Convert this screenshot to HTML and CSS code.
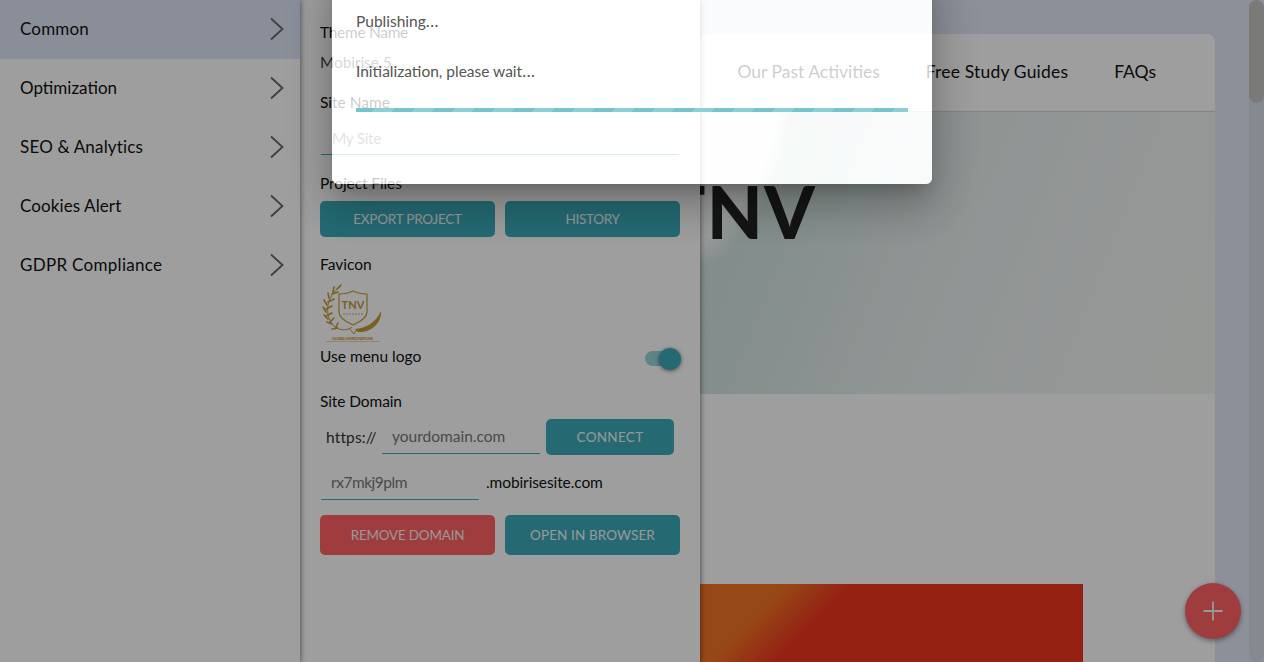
FILE: index.html
```html
<!DOCTYPE html>
<html lang="en">
<head>
<meta charset="utf-8">
<title>Site settings</title>
<link rel="stylesheet" href="styles.css">
</head>
<body>
<div class="app">
  <nav class="sidebar">
    <a class="tab tab-active"><span class="ls-2">Common</span><svg class="chev" viewBox="0 0 14 24"><path d="M1 1.5 12.5 12 1 22.5"/></svg></a>
    <a class="tab"><span>Optimization</span><svg class="chev" viewBox="0 0 14 24"><path d="M1 1.5 12.5 12 1 22.5"/></svg></a>
    <a class="tab"><span class="ls-2">SEO &amp; Analytics</span><svg class="chev" viewBox="0 0 14 24"><path d="M1 1.5 12.5 12 1 22.5"/></svg></a>
    <a class="tab"><span class="ls-1">Cookies Alert</span><svg class="chev" viewBox="0 0 14 24"><path d="M1 1.5 12.5 12 1 22.5"/></svg></a>
    <a class="tab"><span class="ls-3">GDPR Compliance</span><svg class="chev" viewBox="0 0 14 24"><path d="M1 1.5 12.5 12 1 22.5"/></svg></a>
  </nav>

  <section class="panel">
    <div class="label label-theme">Theme Name</div>
    <div class="value">Mobirise 5</div>
    <div class="label label-site">Site Name</div>
    <div class="field field-wide">My Site</div>
    <div class="label label-files">Project Files</div>
    <div class="row">
      <button class="btn ls-n2">EXPORT PROJECT</button>
      <button class="btn ls-n3">HISTORY</button>
    </div>
    <div class="label label-favicon">Favicon</div>
    <svg class="favicon" viewBox="0 0 62 62">
      <g fill="none" stroke="#c49b34">
        <path d="M20 6C7 14 3 34 14 45c6 5 13 5 18 1" stroke-width="1"/>
        <path d="M17 8l4-4M13 11l1-5M12 13l6-2M9 17l-1-5M8 21l6-3M7 24l-3-5M6 28l6-3M6 31l-3-5M6 35l6-3M8 38l-4-4M10 41l4-4M12 43l-5-2M16 46l2-4M18 47l-6 1" stroke-width="1.6" stroke-linecap="round"/>
        <path d="M33 10c4 2 8 3 14 3v18c0 6-7 10-14 13-7-3-14-7-14-13V13c6 0 10-1 14-3z" stroke-width="1.2"/>
        <path d="M23 33h21" stroke-width=".8" stroke-dasharray="2 1"/>
        <path d="M29 47l5 6 3-5" stroke-width="1"/>
        <path d="M6 60.5h54" stroke-width=".4"/>
      </g>
      <path d="M35 48c12-1 21-7 26-18 1 10-8 22-23 21z" fill="#c49b34"/>
      <text class="crest-name" x="21.5" y="27.5" textLength="23">TNV</text>
      <text class="crest-line" x="12" y="58.6" textLength="41">GLOBAL UNITED NATIONS</text>
    </svg>
    <div class="row-toggle">
      <span>Use menu logo</span>
      <span class="toggle"><span class="thumb"></span></span>
    </div>
    <div class="label label-domain">Site Domain</div>
    <div class="domain">
      <span class="proto">https://</span>
      <span class="field field-short">yourdomain.com</span>
      <button class="btn btn-connect">CONNECT</button>
    </div>
    <div class="domain domain-sub">
      <span class="field field-short ls-n5">rx7mkj9plm</span>
      <span class="suffix">.mobirisesite.com</span>
    </div>
    <div class="row row-tall">
      <button class="btn btn-red ls-n2">REMOVE DOMAIN</button>
      <button class="btn ls-1">OPEN IN BROWSER</button>
    </div>
  </section>

  <main class="preview">
    <div class="page">
      <header class="menu">
        <a>Our Past Activities</a>
        <a class="ls-2">Free Study Guides</a>
        <a>FAQs</a>
      </header>
      <div class="hero"><h1>TNV</h1></div>
      <div class="photo"></div>
    </div>
    <div class="track"><div class="handle"></div></div>
  </main>

  <button class="fab"><svg viewBox="0 0 20 20"><path d="M10 .5v19M.5 10h19"/></svg></button>

  <div class="dialog">
    <p class="title">Publishing<span class="dots">…</span></p>
    <p class="status">Initialization, please wait<span class="dots">…</span></p>
    <div class="progress"></div>
  </div>
</div>
</body>
</html>
```
FILE: styles.css
```css
* { box-sizing: border-box; }
body { margin: 0; font-family: Lato, sans-serif; color: #111; }
.app {
  position: relative;
  display: flex;
  width: 1264px;
  height: 662px;
  overflow: hidden;
  background: #e3e9f6;
}

.sidebar { position: relative; z-index: 3; width: 300px; background: #fff; box-shadow: 0 0 6px rgba(0,0,0,.6); }
.tab {
  display: flex;
  align-items: center;
  justify-content: space-between;
  height: 59px;
  padding: 0 16px 2px 20px;
  font-size: 17px;
}
.tab-active { background: #dfe6f6; }
.chev { width: 14px; height: 24px; margin-top: 1px; fill: none; stroke: #666; stroke-width: 1.8; }

.ls-1 { letter-spacing: .1px; }
.ls-2 { letter-spacing: .18px; }
.ls-3 { letter-spacing: .3px; }
.ls-n2 { letter-spacing: -.22px; }
.ls-n3 { letter-spacing: -.3px; }
.ls-n5 { letter-spacing: -.48px; }

.panel {
  position: relative;
  z-index: 2;
  display: flex;
  flex-direction: column;
  width: 400px;
  padding: 0 20px;
  background: #fff;
  font-size: 15.5px;
  line-height: 20px;
  box-shadow: 0 0 6px rgba(0,0,0,.6);
}
.label-theme { margin-top: 22px; letter-spacing: -.3px; }
.value { margin-top: 10px; color: #444; letter-spacing: -.1px; }
.label-site { margin-top: 20px; }
.field { border-bottom: 1px solid #3dabb8; color: #777; padding: 6px 10px 7px; height: 34px; }
.field-wide { margin: 9px 1px 0; padding: 7px 11px 6px; letter-spacing: -.35px; }
.label-files { margin-top: 18px; letter-spacing: -.1px; }
.row { display: flex; gap: 10px; margin-top: 8px; }
.btn {
  flex: 1;
  height: 36px;
  padding: 0;
  border: 0;
  border-radius: 5px;
  background: #3dabb8;
  color: #f5f5f5;
  font-family: inherit;
  font-size: 13.5px;
}
.label-favicon { margin-top: 17px; }
.favicon { width: 62px; height: 62px; margin-top: 7px; flex: none; }
.crest-name { font: 700 11px Lato, sans-serif; fill: #c49b34; }
.crest-line { font: 700 4px Lato, sans-serif; fill: #c49b34; }
.row-toggle { display: flex; justify-content: space-between; margin-top: 3px; height: 24px; }
.toggle { display: flex; justify-content: flex-end; align-items: center; width: 35px; height: 15px; margin-top: 5px; border-radius: 8px; background: #98d5dc; }
.thumb { width: 22px; height: 22px; flex: none; margin-right: -1px; border-radius: 50%; background: #3dabb8; box-shadow: 0 1px 4px rgba(0,0,0,.5); }
.label-domain { margin-top: 21px; letter-spacing: -.1px; }
.domain { display: flex; align-items: center; margin-top: 8px; }
.proto { width: 62px; padding-left: 6px; color: #333; letter-spacing: .15px; }
.field-short { width: 158px; }
.btn-connect { flex: none; width: 128px; margin-left: 6px; letter-spacing: .3px; }
.domain-sub { margin-top: 11px; padding-left: 1px; }
.suffix { margin: -2px 0 0 7px; letter-spacing: -.1px; }
.row-tall { margin-top: 15px; }
.row-tall .btn { height: 40px; }
.btn-red { background: #ff6265; }

.preview { display: flex; justify-content: space-between; width: 564px; }
.page { width: 515px; margin-top: 34px; border-radius: 8px 8px 0 0; background: #fff; }
.menu {
  display: flex;
  justify-content: flex-end;
  gap: 46px;
  height: 78px;
  padding: 0 59px 0 0;
  border-bottom: 1px solid #d5d5d5;
  font-size: 17.5px;
  line-height: 76px;
  white-space: nowrap;
}
.hero {
  height: 282px;
  background:
    radial-gradient(ellipse 125px 210px at -30px -50px, rgba(255,255,255,.85) 88%, rgba(255,255,255,0) 102%),
    linear-gradient(112deg, #cfe2df 0%, #d6e6e3 20%, #e8f0ef 48%, #f0f4f3 75%, #f3f5f2 100%);
}
h1 { margin: 0 0 0 -38px; padding-top: 56px; font-size: 72px; line-height: 86px; font-weight: 900; letter-spacing: 1.5px; color: #222; }
.photo { width: 383px; height: 78px; margin-top: 190px; background: linear-gradient(135deg, #f37426 62px, #ef341e 110px); }
.track { width: 15px; border-radius: 8px; background: #d8dde9; }
.handle { height: 103px; border-radius: 8px; background: #c6c6c2; }

.fab {
  position: absolute;
  z-index: 3;
  right: 23px;
  bottom: 23px;
  width: 56px;
  height: 56px;
  border: 0;
  padding: 18px;
  border-radius: 50%;
  background: #ff6265;
  box-shadow: 0 2px 5px rgba(0,0,0,.4);
}
.fab svg { display: block; width: 20px; height: 20px; fill: none; stroke: #f5f5f5; stroke-width: 1.8; }

.dialog {
  position: absolute;
  z-index: 5;
  top: -30px;
  left: 332px;
  width: 600px;
  height: 214px;
  padding: 41px 24px 0;
  border-radius: 6px;
  background: rgba(255,255,255,.79);
  color: #555;
  font-size: 15.5px;
  line-height: 20px;
  box-shadow: 0 11px 15px -7px rgba(0,0,0,.2), 0 24px 38px 3px rgba(0,0,0,.14), 0 9px 46px 8px rgba(0,0,0,.12), 0 0 0 1400px rgba(0,0,0,.38);
}
.dialog p { margin: 0; }
.dots { font-size: 17px; }
.dialog .status { margin-top: 30px; }
.progress {
  height: 4px;
  margin-top: 27px;
  background: repeating-linear-gradient(135deg, #74c4cb 0 14.1px, #8bd0d6 14.1px 28.28px);
}
```
